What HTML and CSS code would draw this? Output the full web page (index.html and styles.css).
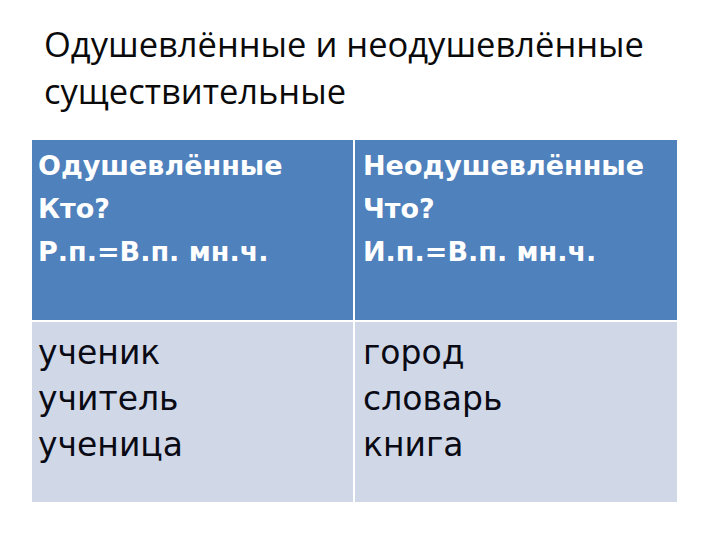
FILE: index.html
```html
<!DOCTYPE html>
<html lang="ru">
<head>
<meta charset="utf-8">
<title>Одушевлённые и неодушевлённые существительные</title>
<link rel="stylesheet" href="styles.css">
</head>
<body>
<div class="slide">
  <h1 class="title">Одушевлённые и неодушевлённые существительные</h1>
  <div class="table">
    <div class="cell head">Одушевлённые<br>Кто?<br>Р.п.=В.п. мн.ч.</div>
    <div class="cell head right">Неодушевлённые<br>Что?<br>И.п.=В.п. мн.ч.</div>
    <div class="cell body">ученик<br>учитель<br>ученица</div>
    <div class="cell body right">город<br>словарь<br>книга</div>
  </div>
</div>
</body>
</html>
```
FILE: styles.css
```css
html, body {
  margin: 0;
  padding: 0;
  background: #ffffff;
}
.slide {
  width: 720px;
  height: 540px;
  box-sizing: border-box;
  padding: 20px 0 0 0;
}
.title {
  margin: 0 0 0 44px;
  width: 660px;
  font-family: "Open Sans", "Liberation Sans", sans-serif;
  font-weight: 400;
  font-size: 34.5px;
  line-height: 47px;
  color: #0a0a0a;
  height: 100px;
}
.table {
  margin: 20px 0 0 32px;
  width: 645px;
  display: grid;
  grid-template-columns: 321px 322px;
  grid-template-rows: 180px 180px;
  column-gap: 2px;
  row-gap: 2px;
}
.cell {
  box-sizing: border-box;
  padding: 4px 6px 0 6px;
}
.cell.right {
  padding-left: 8px;
}
.head {
  background: #4f81bd;
  color: #ffffff;
  font-family: "DejaVu Sans", sans-serif;
  font-weight: 700;
  font-size: 27px;
  line-height: 43px;
}
.body {
  background: #d0d8e8;
  color: #0a0a14;
  font-family: "DejaVu Sans", sans-serif;
  font-weight: 400;
  font-size: 33px;
  line-height: 46px;
  padding-top: 8px;
}
```
